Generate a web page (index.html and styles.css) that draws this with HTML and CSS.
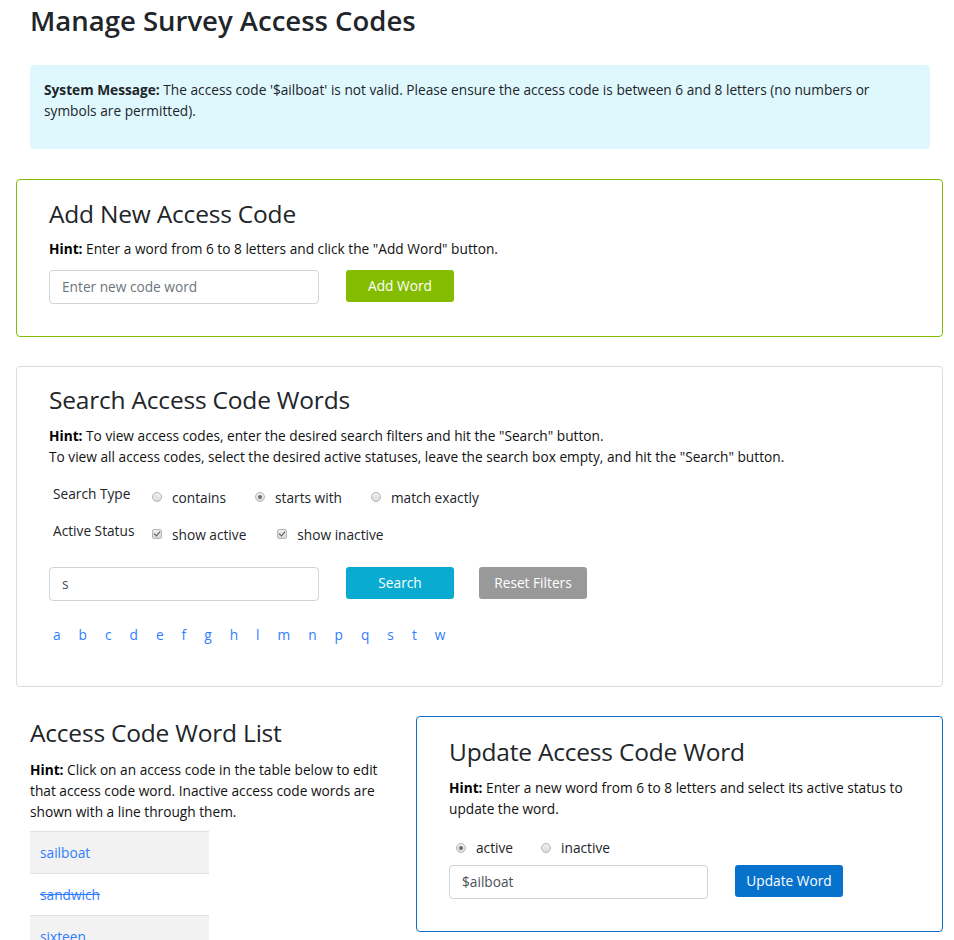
FILE: index.html
```html
<!DOCTYPE html>
<html lang="en">
<head>
<meta charset="utf-8">
<title>Manage Survey Access Codes</title>
<link rel="stylesheet" href="styles.css">
</head>
<body>
<div class="page">
  <h1 class="title">Manage Survey Access Codes</h1>

  <div class="alert">
    <b>System Message:</b> The access code '$ailboat' is not valid. Please ensure the access code is between 6 and 8 letters (no numbers or symbols are permitted).
  </div>

  <section class="card card-green">
    <h2 class="card-title">Add New Access Code</h2>
    <p class="hint"><b>Hint:</b> Enter a word from 6 to 8 letters and click the "Add Word" button.</p>
    <div class="form-row">
      <div class="input placeholder">Enter new code word</div>
      <button class="btn btn-green">Add Word</button>
    </div>
  </section>

  <section class="card card-gray">
    <h2 class="card-title">Search Access Code Words</h2>
    <p class="hint"><b>Hint:</b> To view access codes, enter the desired search filters and hit the "Search" button.<br>To view all access codes, select the desired active statuses, leave the search box empty, and hit the "Search" button.</p>
    <div class="filters">
      <div class="filter-row">
        <span class="filter-label">Search Type</span>
        <span class="opt"><span class="radio"></span>contains</span>
        <span class="opt"><span class="radio checked"></span>starts with</span>
        <span class="opt"><span class="radio"></span>match exactly</span>
      </div>
      <div class="filter-row">
        <span class="filter-label">Active Status</span>
        <span class="opt opt-wide"><span class="check"></span>show active</span>
        <span class="opt"><span class="check"></span>show inactive</span>
      </div>
    </div>
    <div class="form-row form-row-search">
      <div class="input">s</div>
      <button class="btn btn-cyan">Search</button>
      <button class="btn btn-gray">Reset Filters</button>
    </div>
    <div class="letters">
      <a>a</a><a>b</a><a>c</a><a>d</a><a>e</a><a>f</a><a>g</a><a>h</a><a>l</a><a>m</a><a>n</a><a>p</a><a>q</a><a>s</a><a>t</a><a>w</a>
    </div>
  </section>

  <div class="bottom">
    <div class="list-col">
      <h2 class="card-title">Access Code Word List</h2>
      <p class="hint">
        <b>Hint:</b> Click on an access code in the table below to edit that access code word. Inactive access code words are shown with a line through them.
      </p>
      <div class="words">
        <div class="word-row shade"><a>sailboat</a></div>
        <div class="word-row"><a class="inactive">sandwich</a></div>
        <div class="word-row shade"><a>sixteen</a></div>
      </div>
    </div>

    <section class="card card-blue">
      <h2 class="card-title">Update Access Code Word</h2>
      <p class="hint"><b>Hint:</b> Enter a new word from 6 to 8 letters and select its active status to update the word.</p>
      <div class="status-row">
        <span class="opt"><span class="radio checked"></span>active</span>
        <span class="opt"><span class="radio"></span>inactive</span>
      </div>
      <div class="form-row">
        <div class="input input-update">$ailboat</div>
        <button class="btn btn-blue">Update Word</button>
      </div>
    </section>
  </div>
</div>
</body>
</html>
```
FILE: styles.css
```css
* { box-sizing: border-box; }
html, body { margin: 0; padding: 0; background: #fff; }
body {
  font-family: "Open Sans", "Noto Sans", sans-serif;
  font-size: 13.7px;
  line-height: 21px;
  color: #212529;
}
.page {
  width: 927px;
  margin-left: 16px;
}
.title {
  margin: 0;
  padding: 3px 0 0 14px;
  font-size: 27.5px;
  line-height: 36px;
  font-weight: 600;
  color: #212529;
}
.alert {
  margin: 26px 13px 30px 14px;
  background: #dff8fd;
  border-radius: 4px;
  padding: 14px 14px 28px;
  height: 84px;
}
.alert b { font-weight: 700; }
.card {
  border: 1px solid #ddd;
  border-radius: 4px;
  padding: 19px 32px 32px;
  margin-bottom: 29px;
}
.card-green { border-color: #84bd00; }
.card-gray { border-color: #dcdcdc; padding-top: 18px; padding-bottom: 41px; }
.card-blue { border-color: #0a6fcb; }
.card-title {
  margin: 0;
  font-size: 24.5px;
  line-height: 29px;
  font-weight: 400;
  color: #212529;
  letter-spacing: -0.2px;
}
.hint {
  margin: 10px 0 0;
  color: #111;
}
.card-gray .hint { margin-top: 11px; }
.hint b { font-weight: 700; color: #000; }
.form-row {
  display: flex;
  align-items: flex-start;
  margin-top: 11px;
}
.input {
  width: 270px;
  height: 34px;
  border: 1px solid #ced4da;
  border-radius: 4px;
  padding: 5px 12px;
  color: #495057;
  line-height: 22px;
  background: #fff;
}
.input.placeholder { color: #6c757d; }
.btn {
  height: 32px;
  width: 108px;
  border: none;
  border-radius: 3px;
  margin-left: 27px;
  padding: 0;
  font-family: inherit;
  font-size: 13.7px;
  color: #fff;
  line-height: 32px;
}
.btn-green { background: #84bd00; }
.btn-cyan { background: #0aabd0; }
.btn-gray { background: #999; margin-left: 25px; }
.btn-blue { background: #0672cc; }
.filters {
  margin-top: 16px;
  padding-left: 4px;
}
.filter-row {
  display: flex;
  align-items: center;
  height: 26px;
}
.filter-row + .filter-row { margin-top: 11px; }
.filter-label {
  width: 99px;
  position: relative;
  top: -3px;
}
.opt {
  display: inline-flex;
  align-items: center;
  margin-right: 29px;
  position: relative;
  top: 1px;
}
.opt-wide { margin-right: 31px; }
.radio {
  width: 10px;
  height: 10px;
  border-radius: 50%;
  border: 1px solid #b5b5b5;
  background: linear-gradient(#f0f0f0, #dcdcdc);
  margin-right: 10px;
  position: relative;
}
.radio.checked::after {
  content: "";
  position: absolute;
  left: 2px;
  top: 2px;
  width: 4px;
  height: 4px;
  border-radius: 50%;
  background: #6b6b6b;
}
.check {
  width: 10px;
  height: 10px;
  border: 1px solid #b5b5b5;
  border-radius: 2px;
  background: linear-gradient(#eee, #d8d8d8);
  margin-right: 10px;
  position: relative;
}
.check::after {
  content: "";
  position: absolute;
  left: 2px;
  top: 0px;
  width: 3px;
  height: 5px;
  border: solid #555;
  border-width: 0 1.5px 1.5px 0;
  transform: rotate(40deg);
}
.form-row-search { margin-top: 21px; }
.letters {
  display: flex;
  gap: 18px;
  margin-top: 23px;
  padding-left: 4px;
}
.letters a, .words a {
  color: #2f7dff;
  text-decoration: none;
}
.bottom {
  display: flex;
  align-items: flex-start;
  margin-top: 0;
}
.list-col {
  width: 400px;
  padding: 2px 20px 0 14px;
}
.list-col .hint { margin-top: 12px; }
.words {
  width: 179px;
  margin-top: 9px;
}
.word-row {
  height: 42px;
  border-top: 1px solid #dee2e6;
  padding: 0 10px;
  line-height: 41px;
}
.word-row.shade { background: #f2f2f2; }
.words a.inactive { text-decoration: line-through; }
.card-blue {
  flex: 1;
  margin: 0;
  padding: 20px 32px 32px;
}
.card-blue .hint { margin-top: 11px; }
.status-row {
  display: flex;
  margin-top: 17px;
  padding-left: 7px;
}
.status-row .opt { margin-right: 28px; }
.card-blue .form-row { margin-top: 8px; }
.input-update { width: 259px; }
```
